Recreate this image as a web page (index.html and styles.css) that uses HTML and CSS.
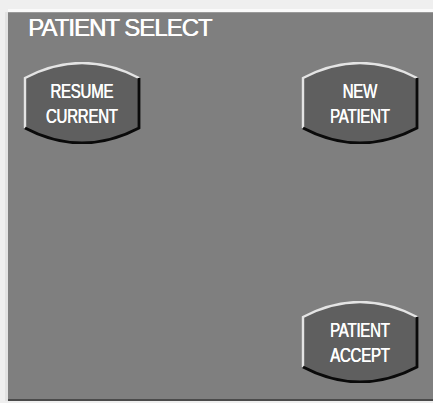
FILE: index.html
```html
<!DOCTYPE html>
<html>
<head>
<meta charset="utf-8">
<link rel="stylesheet" href="styles.css">
</head>
<body>
<div class="panel">
  <h1 class="title">PATIENT SELECT</h1>
  <div class="row top-row">
    <div class="btn">
      <svg class="shape" viewBox="0 0 118 82" width="118" height="82"><path class="fill" d="M2,16 Q59,-14 116,16 L116,66 Q59,96 2,66 Z"/><path class="hl" d="M2,66 L2,16 Q59,-14 116,16"/><path class="sh" d="M116,16 L116,66 Q59,96 2,66"/></svg>
      <span class="label">RESUME<br>CURRENT</span>
    </div>
    <div class="btn">
      <svg class="shape" viewBox="0 0 118 82" width="118" height="82"><path class="fill" d="M2,16 Q59,-14 116,16 L116,66 Q59,96 2,66 Z"/><path class="hl" d="M2,66 L2,16 Q59,-14 116,16"/><path class="sh" d="M116,16 L116,66 Q59,96 2,66"/></svg>
      <span class="label">NEW<br>PATIENT</span>
    </div>
  </div>
  <div class="row bottom-row">
    <div class="btn">
      <svg class="shape" viewBox="0 0 118 82" width="118" height="82"><path class="fill" d="M2,16 Q59,-14 116,16 L116,66 Q59,96 2,66 Z"/><path class="hl" d="M2,66 L2,16 Q59,-14 116,16"/><path class="sh" d="M116,16 L116,66 Q59,96 2,66"/></svg>
      <span class="label">PATIENT<br>ACCEPT</span>
    </div>
  </div>
</div>
</body>
</html>
```
FILE: styles.css
```css
html, body {
  margin: 0;
  padding: 0;
}
body {
  background: #efefef;
  width: 433px;
  height: 403px;
  overflow: hidden;
  font-family: "Liberation Sans", Arial, sans-serif;
}
.panel {
  margin: 12px 0 0 8px;
  height: 389px;
  background: #7f7f7f;
  border-top: 1px solid #9a9a9a;
  border-bottom: 2px solid #4a4a4a;
  box-sizing: border-box;
  padding: 1px 14px 16px 15px;
  display: flex;
  flex-direction: column;
  box-shadow: -3px 0 0 #e2e2e2, 0 -3px 0 #fafafa;
}
.title {
  margin: 0 0 0 5px;
  font-size: 24px;
  line-height: 28px;
  font-weight: normal;
  color: #fff;
  letter-spacing: -1px;
  text-shadow: 0.6px 0 0 #fff;
}
.row {
  display: flex;
  justify-content: space-between;
}
.top-row {
  margin-top: 20px;
}
.bottom-row {
  margin-top: auto;
  justify-content: flex-end;
}
.btn {
  position: relative;
  width: 118px;
  height: 82px;
  display: flex;
  align-items: center;
  justify-content: center;
}
.shape {
  position: absolute;
  left: 0;
  top: 0;
}
.fill {
  fill: #5f5f5f;
}
.hl {
  fill: none;
  stroke: #e4e4e4;
  stroke-width: 2.4;
}
.sh {
  fill: none;
  stroke: #0a0a0a;
  stroke-width: 2.8;
}
.label {
  position: relative;
  top: 1px;
  color: #fff;
  font-size: 19.5px;
  line-height: 25px;
  letter-spacing: -0.3px;
  text-align: center;
  transform: scaleX(0.77);
  text-shadow: 0.6px 0 0 #fff;
  white-space: nowrap;
}
```
